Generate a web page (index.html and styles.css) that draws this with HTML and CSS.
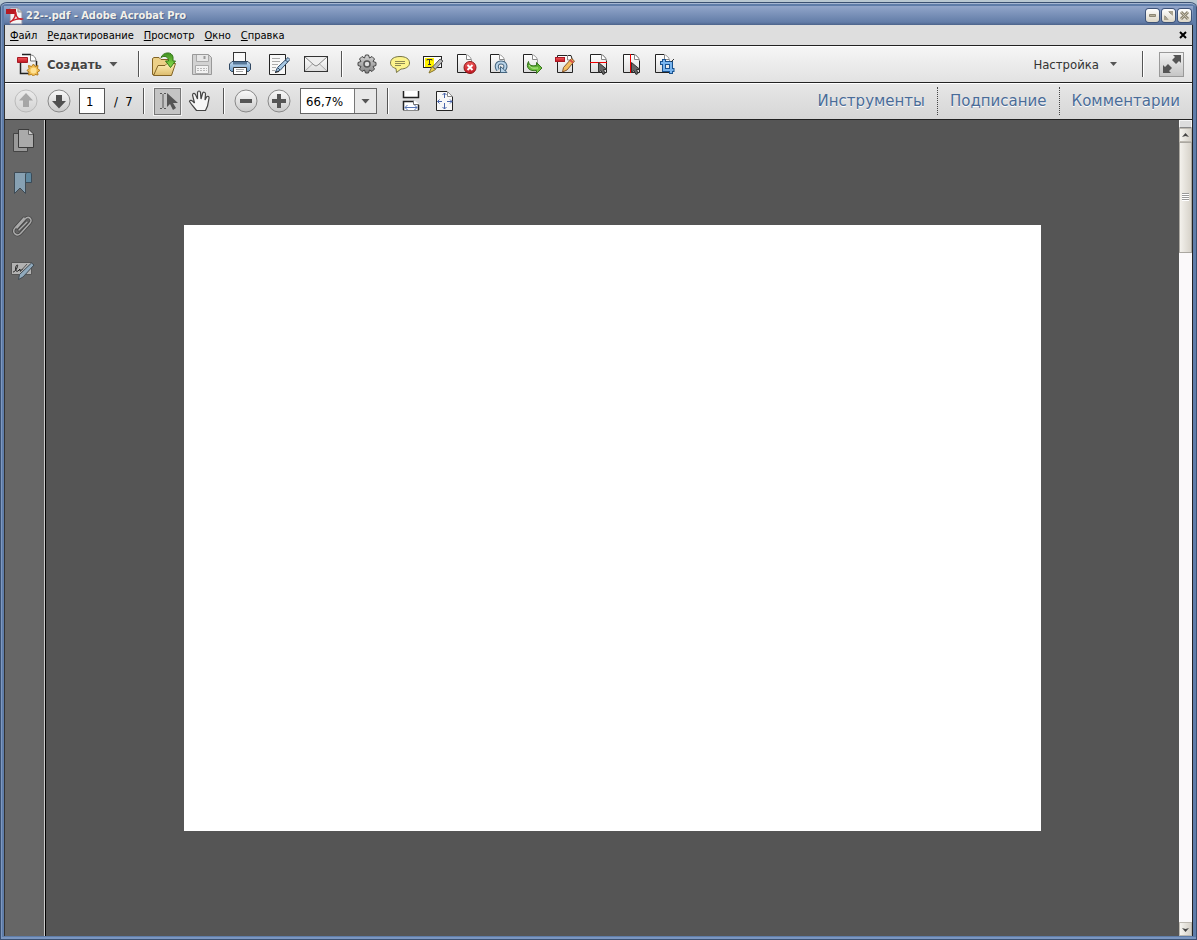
FILE: index.html
```html
<!DOCTYPE html>
<html lang="ru">
<head>
<meta charset="utf-8">
<title>22--.pdf - Adobe Acrobat Pro</title>
<link rel="stylesheet" href="styles.css">
</head>
<body>
<svg class="defs" aria-hidden="true">
  <defs>
    <linearGradient id="paper" x1="0" y1="0" x2="0" y2="1"><stop offset="0" stop-color="#fff"/><stop offset="1" stop-color="#dcdcdc"/></linearGradient>
    <linearGradient id="round" x1="0" y1="0" x2="0" y2="1"><stop offset="0" stop-color="#fafafa"/><stop offset="1" stop-color="#c9c9c9"/></linearGradient>
    <linearGradient id="green" x1="0" y1="0" x2="0" y2="1"><stop offset="0" stop-color="#3f8f20"/><stop offset="1" stop-color="#8ae04c"/></linearGradient>
    <linearGradient id="folder" x1="0" y1="0" x2="0" y2="1"><stop offset="0" stop-color="#fff0b8"/><stop offset="1" stop-color="#dcbb6c"/></linearGradient>
    <linearGradient id="red" x1="0" y1="0" x2="0" y2="1"><stop offset="0" stop-color="#f25a5a"/><stop offset="1" stop-color="#c01420"/></linearGradient>
    <linearGradient id="metal" x1="0" y1="0" x2="0" y2="1"><stop offset="0" stop-color="#d4d4d4"/><stop offset="1" stop-color="#858585"/></linearGradient>
    <linearGradient id="blue" x1="0" y1="0" x2="0" y2="1"><stop offset="0" stop-color="#c4dcf0"/><stop offset="1" stop-color="#6f9cc8"/></linearGradient>
    <g id="sheet"><path d="M3.500 2.500H13.500L17.500 6.500V20.500H3.500Z" fill="url(#paper)"/><path d="M12 2.500H3.500V20.500H17.500" fill="none" stroke="#222"/><path d="M12 2.500C14 3 17 5 17.500 8V20.500" fill="none" stroke="#999"/><path d="M12.500 3V7.500H17" fill="#fff" stroke="#888"/></g>
    <g id="sheetTall"><path d="M4.500 2.500H16L20.500 7V20.500H4.500Z" fill="url(#paper)"/><path d="M15 2.500H4.500V20.500H20.500V9" fill="none" stroke="#222"/><path d="M15 2.500C17 3 20 5 20.500 9" fill="none" stroke="#666"/><path d="M15.500 3V7.500H20" fill="#fff" stroke="#888"/></g>
    <path id="cursor" d="M12.500 10.500V20.500L15 18.500L17 22.500L19 21.500L17.500 17.500H21Z" fill="#666" stroke="#333"/>
  </defs>
</svg>
<div class="window">
  <header class="titlebar">
    <svg class="app-icon" width="18" height="18" viewBox="0 0 18 18"><path d="M4 1H12L16 5V17H4Z" fill="#f4f4f4" stroke="#8b8ba0"/><path d="M12 1V5H16" fill="#ccc" stroke="#999"/><path d="M0 2H10V7H0Z" fill="#b51a22"/><path d="M4 15C7 14 10 9 9 6C8 4 10 4 10 7C10 10 13 13 16 12C13 11 7 13 4 15Z" fill="none" stroke="#c81e28" stroke-width="1.500"/></svg>
    <h1 class="title">22--.pdf - Adobe Acrobat Pro</h1>
    <div class="window-controls">
      <button class="window-button" aria-label="Свернуть"><svg width="13" height="13"><path d="M3.500 5.500H9.500V7.500H3.500Z" fill="#b5ae98" stroke="#8d8775"/></svg></button>
      <button class="window-button" aria-label="Восстановить"><svg width="13" height="13"><path d="M6 2H11V7ZM2 6V11H7Z" fill="#aaa38e"/><path d="M7 3L10 6M3 7L6 10" stroke="#777" stroke-dasharray="1 1"/></svg></button>
      <button class="window-button" aria-label="Закрыть"><svg width="13" height="13"><path d="M3 3L10 10M10 3L3 10" stroke="#8d8775" stroke-width="3"/><path d="M3 3L10 10M10 3L3 10" stroke="#c8c1ac"/></svg></button>
    </div>
  </header>
  <div class="client">
    <nav class="menubar" aria-label="Меню">
      <button class="menu-item"><u>Ф</u>айл</button>
      <button class="menu-item"><u>Р</u>едактирование</button>
      <button class="menu-item"><u>П</u>росмотр</button>
      <button class="menu-item"><u>О</u>кно</button>
      <button class="menu-item"><u>С</u>правка</button>
      <button class="close-doc" aria-label="Закрыть документ"><svg width="8" height="8"><path d="M1 1L7 7M7 1L1 7" stroke="#000" stroke-width="2"/></svg></button>
    </nav>
    <div class="toolbar toolbar-main">
      <button class="create"><svg width="24" height="24"><path d="M4.500 3.500H15L20.500 9V21.500H4.500Z" fill="url(#paper)"/><path d="M6 2.500H15M20.500 9V15M4.500 10V21.500H13" fill="none" stroke="#222" stroke-width="1.500"/><path d="M14.500 3V9H20C20 6 18 3 14.500 3Z" fill="#fff" stroke="#777"/><path d="M1.500 5.500H11.500V10.500H1.500Z" fill="url(#red)" stroke="#a51a25"/><path d="M17.500 12L19 14.500L22 13.500L21.500 16.500L24 18.500L21.500 20L22 23L19 22.500L17.500 24L15.500 22.500L12.500 23L13 20L11 18.500L13 16.500L12.500 13.500L15.500 14.500Z" fill="#efbc50" stroke="#b37b1c"/><circle cx="17.500" cy="18.500" r="3" fill="#ffe193"/></svg><span>Создать</span><i class="arrow"></i></button>
      <span class="separator"></span>
      <div class="file-tools">
        <button class="tool" aria-label="Открыть"><svg width="24" height="24"><path d="M.5 22.500V6.500L2 5.500H7L9 7.500H19.500V22.500Z" fill="#ecd087" stroke="#826324"/><path d="M1.500 23.500L6 13.500H13L15 11.500H23.500L19.500 23.500Z" fill="url(#folder)" stroke="#826324"/><path d="M9 5.500C11 0 20 -1 21 5V9H23.500L18.500 15.500L13.500 9H16.500C16.500 5 13 3 9 5.500Z" fill="url(#green)" stroke="#347818"/></svg></button>
        <button class="tool" aria-label="Сохранить"><svg width="24" height="24"><path d="M2.500 2.500H18.500L21.500 5.500V22.500H2.500Z" fill="#d2d2d2" stroke="#999"/><path d="M6.500 3V9.500H18.500V3" fill="#e7e7e7" stroke="#aaa"/><path d="M14.500 4V7" stroke="#999" stroke-width="2"/><path d="M5.500 13.500H18.500V21.500H5.500Z" fill="#f2f2f2" stroke="#aaa"/><path d="M7 16.500H17M7 18.500H17" stroke="#b8b8b8" stroke-dasharray="2 1"/></svg></button>
        <button class="tool" aria-label="Печать"><svg width="24" height="24"><rect x="5.500" y=".5" width="12" height="10" fill="#f8f8f8" stroke="#333"/><path d="M4 9.500H20L22.500 12V17.500L20.500 19.500H3.500L1.500 17.500V12Z" fill="url(#blue)" stroke="#304862"/><path d="M5 10H19V12.500H5Z" fill="#587899"/><path d="M5.500 15.500H18.500V22.500H5.500Z" fill="#fff" stroke="#333"/><path d="M8 17.500H16M8 19.500H15" stroke="#a6a6a6"/></svg></button>
        <button class="tool" aria-label="Подписать"><svg width="24" height="24"><path d="M3.500 2.500H19.500V22.500H3.500Z" fill="#f8f8f8" stroke="#222"/><path d="M6 6.500H14M6 9.500H14M6 12.500H12M6 15.500H10M6 18.500H9" stroke="#aaa"/><path d="M22 5.500L24 7.500L14 18.500L9.500 20L11.500 15.500Z" fill="#a8c9e5" stroke="#334b66"/><path d="M12 16L14 18M19 8L22 10" stroke="#334b66"/><path d="M9 20.500L13 19.500" stroke="#222"/></svg></button>
        <button class="tool" aria-label="Отправить"><svg width="24" height="24"><rect x=".5" y="4.500" width="23" height="15" fill="url(#paper)" stroke="#333"/><path d="M1 19L9 11.500M23 19L15 11.500" stroke="#aaa"/><path d="M1 5L10 13Q12 15 14 13L23 5" fill="#eee" stroke="#888"/></svg></button>
      </div>
      <span class="separator"></span>
      <div class="quick-tools">
        <button class="tool" aria-label="Параметры"><svg width="24" height="24"><path d="M10.500 3H13.500L14.500 6L17 4.500L19.500 7L18 9.500L21 10.500V13.500L18 14.500L19.500 17L17 19.500L14.500 18L13.500 21H10.500L9.500 18L7 19.500L4.500 17L6 14.500L3 13.500V10.500L6 9.500L4.500 7L7 4.500L9.500 6Z" fill="url(#metal)" stroke="#444"/><circle cx="12" cy="12" r="3" fill="#ddd" stroke="#555" stroke-width="1.500"/></svg></button>
        <button class="tool" aria-label="Комментарий"><svg width="24" height="24"><path d="M12 4.500C18 4.500 21.500 7 21.500 11C21.500 15 17 17 13 17L8.500 20.500L8 16.500C4 15.500 2.500 13 2.500 11C2.500 7 6 4.500 12 4.500Z" fill="#fcf38c" stroke="#777547"/><path d="M7 9.500H17M7 11.500H17M7 13.500H13" stroke="#8c8855"/></svg></button>
        <button class="tool" aria-label="Выделить текст"><svg width="24" height="24"><rect x="2.500" y="4.500" width="18" height="11" fill="#fff" stroke="#222"/><path d="M4 6H13V15H4Z" fill="#fff200"/><path d="M6 8.500V7.500H11V8.500M8.500 8V13M7 12.500H10" fill="none" stroke="#333"/><path d="M19 7L22 9L14.500 17L11.500 15Z" fill="#b9b9b9" stroke="#555"/><path d="M11 14.500L14.500 17.500L12 19L8 21Z" fill="#ead04c" stroke="#85742c"/></svg></button>
        <button class="tool" aria-label="Удалить страницы"><svg width="24" height="24"><use href="#sheet"/><circle cx="16" cy="15.500" r="6" fill="url(#red)" stroke="#8d1818"/><path d="M13.500 13L18.500 18M18.500 13L13.500 18" stroke="#fff" stroke-width="2"/></svg></button>
        <button class="tool" aria-label="Повернуть страницы"><svg width="24" height="24"><use href="#sheet"/><path d="M11 18C8 13 11 10.500 14 10.500C18 10.500 20 14 17 18" fill="none" stroke="#44647e" stroke-width="4"/><path d="M11 18C8 13 11 10.500 14 10.500C18 10.500 20 14 17 18" fill="none" stroke="#b8d3e8" stroke-width="2"/><path d="M13.500 14.500V20.500H20L17.500 18Z" fill="#b8d3e8" stroke="#44647e"/></svg></button>
        <button class="tool" aria-label="Извлечь страницы"><svg width="24" height="24"><use href="#sheet"/><path d="M8.500 9.500C9 14 12 14 16.500 13.500V10.500L22 16L16.500 21.500V18.500C10 19.500 5 16 8.500 9.500Z" fill="url(#green)" stroke="#397321"/><path d="M9 13C11 17 14 16 18 16" fill="none" stroke="#c3ee9d"/></svg></button>
        <button class="tool" aria-label="Редактировать"><svg width="24" height="24"><path d="M4.500 3.500H18L19.500 8V20.500H4.500Z" fill="url(#paper)" stroke="#222"/><path d="M14.500 3V8H19" fill="#fff" stroke="#888"/><rect x="2.500" y="5.500" width="9" height="4" fill="url(#red)" stroke="#aa1824"/><path d="M18.500 6.500L21.500 9L14 18L9.500 20L10.500 15.500Z" fill="#f3bd61" stroke="#87562d"/><path d="M17 8L20 10.500" stroke="#d74f46" stroke-width="2"/></svg></button>
        <button class="tool" aria-label="Разделить по горизонтали"><svg width="24" height="24"><use href="#sheetTall"/><rect x="4" y="10" width="17" height="1" fill="#f00000"/><use href="#cursor"/></svg></button>
        <button class="tool" aria-label="Разделить по вертикали"><svg width="24" height="24"><use href="#sheetTall"/><rect x="11" y="2" width="1" height="19" fill="#f00000"/><use href="#cursor"/></svg></button>
        <button class="tool" aria-label="Обрезать"><svg width="24" height="24"><use href="#sheet"/><path d="M12 7V18H22.500M8 11H19V22" fill="none" stroke="#19528f" stroke-width="4"/><path d="M12 8V18H21.500M9 11H19V21" fill="none" stroke="#79b5ef" stroke-width="2"/><path d="M19 10L22 7" stroke="#333"/></svg></button>
      </div>
      <div class="right-tools">
        <button class="customize">Настройка<i class="arrow small"></i></button>
        <span class="separator"></span>
        <button class="fullscreen" aria-label="Полный экран"><svg width="22" height="22"><path d="M12 2H20V10L18 8L15 11L11 7L14 4ZM2 12L4 14L7 11L11 15L8 18L10 20H2Z" fill="#555"/></svg></button>
      </div>
    </div>
    <div class="toolbar toolbar-view">
      <div class="pager">
        <button class="circle disabled" aria-label="Предыдущая страница"><svg width="24" height="24"><circle cx="12" cy="12" r="11" fill="url(#round)" stroke="#888"/><path d="M12 4L19 11.500H15V18H9V11.500H5Z" fill="#555"/></svg></button>
        <button class="circle" aria-label="Следующая страница"><svg width="24" height="24"><circle cx="12" cy="12" r="11" fill="url(#round)" stroke="#888"/><path d="M12 19.500L5 12H9V6H15V12H19Z" fill="#505050"/></svg></button>
      </div>
      <input class="page-number" aria-label="Страница" value="1">
      <span class="page-total">/&nbsp; 7</span>
      <span class="separator"></span>
      <div class="pointer-tools">
        <button class="selected" aria-label="Выделение"><svg width="24" height="24"><path d="M4 4.500H6M8 4.500H10M4 19.500H6M8 19.500H10M7 5V19" stroke="#555"/><path d="M11 4V18L14 15L17 21L20 19L17 14H22Z" fill="#555"/></svg></button>
        <button class="hand" aria-label="Рука"><svg width="24" height="24"><path d="M8.500 21.500L4 16L1.500 12.500C2 10.500 4 11 6.500 14L4.500 6C5 3.500 7 4 8 6.500L9.500 10V3.500C10 1.500 12 1.500 12.500 3.500L13 10L14.500 4.500C15 2.500 17.500 3 17.500 5L17 11L18.500 8C20 6.500 21.500 7.500 21 9.500L19.500 17L17.500 21.500Z" fill="#f7f7f7" stroke="#444" stroke-width="1.200"/></svg></button>
      </div>
      <span class="separator"></span>
      <div class="zoom-buttons">
        <button class="circle" aria-label="Уменьшить"><svg width="24" height="24"><circle cx="12" cy="12" r="11" fill="url(#round)" stroke="#888"/><path d="M6 10H18V14H6Z" fill="#555"/></svg></button>
        <button class="circle" aria-label="Увеличить"><svg width="24" height="24"><circle cx="12" cy="12" r="11" fill="url(#round)" stroke="#888"/><path d="M10 5H14V10H19V14H14V19H10V14H5V10H10Z" fill="#555"/></svg></button>
      </div>
      <div class="zoom-box"><input class="zoom-value" aria-label="Масштаб" value="66,7%"><button class="zoom-drop" aria-label="Выбрать масштаб"><i class="arrow"></i></button></div>
      <span class="separator"></span>
      <div class="fit-tools">
        <button class="tool" aria-label="По ширине"><svg width="24" height="24"><path d="M4 2H20V8H4ZM4 12H16L20 15V21H4Z" fill="#fff"/><path d="M4.500 2V8.500H19.500V2M4.500 21V12.500H15M19.500 16V21" fill="none" stroke="#222" stroke-width="1.500"/><path d="M4 21.500H20" stroke="#888"/><path d="M14.500 12V15.500H20" fill="none" stroke="#777"/><path d="M6 18.500H18M8.500 16L6 18.500L8.500 21M15.500 16L18 18.500L15.500 21" fill="none" stroke="#5976b5"/></svg></button>
        <button class="tool" aria-label="Страница целиком"><svg width="24" height="24"><path d="M4.500 2.500H15L20.500 8V21.500H4.500Z" fill="#f7f7f7" stroke="#222"/><path d="M15.500 3V7.500H20" fill="#fff" stroke="#888"/><path d="M12.500 4V9M12.500 14V20M5.500 12.500H10M15 12.500H20M10.500 6L12.500 4L14.500 6M10.500 18L12.500 20L14.500 18M7.500 10.500L5.500 12.500L7.500 14.500M18 10.500L20 12.500L18 14.500" fill="none" stroke="#4965aa"/></svg></button>
      </div>
      <nav class="panes" aria-label="Панели">
        <button class="pane-link">Инструменты</button>
        <button class="pane-link">Подписание</button>
        <button class="pane-link">Комментарии</button>
      </nav>
    </div>
    <div class="workspace">
      <aside class="sidebar" aria-label="Навигация">
        <button class="side-tool" aria-label="Миниатюры страниц"><svg width="24" height="24"><path d="M2.500 5.500H16.500V23.500H2.500Z" fill="#999" stroke="#444"/><path d="M7.500 1.500H18L22.500 6V19.500H7.500Z" fill="#aaa" stroke="#3b3b3b"/><path d="M17.500 2V6.500H22" fill="#ccc" stroke="#666"/></svg></button>
        <button class="side-tool" aria-label="Закладки"><svg width="24" height="24"><path d="M14 1.500H19.500Q20.500 2 20.500 4V11.500H14Z" fill="#60889f" stroke="#3a4b58"/><path d="M3.500 1.500H16Q14 2 14.500 5V22.500L9 17L3.500 22.500Z" fill="#87a1b3" stroke="#3e4b55"/></svg></button>
        <button class="side-tool" aria-label="Вложения"><svg width="24" height="24"><path d="M6 14L14 5C18 1 22 6 19 9L10 19C6 24 0 18 4 14L13 4M8 16L16 8" fill="none" stroke="#444" stroke-width="3" stroke-linecap="round"/><path d="M6 14L14 5C18 1 22 6 19 9L10 19C6 24 0 18 4 14L13 4M8 16L16 8" fill="none" stroke="#aaa" stroke-width="1.500" stroke-linecap="round"/></svg></button>
        <button class="side-tool" aria-label="Подписи"><svg width="24" height="24"><path d="M.5 5.500H20.500V17.500H.5Z" fill="#b2b2b2" stroke="#555"/><path d="M2 15C5 15 8 7 6 8C4 9 4 16 7 14L9 12L9 14L12 12" fill="none" stroke="#222"/><path d="M20.500 6L23 8L12 20L7.500 22.500L8.500 17.500Z" fill="#91aabd" stroke="#3f4a52"/><path d="M16 7L9 15" stroke="#555"/></svg></button>
      </aside>
      <main class="document"><div class="page"></div></main>
      <div class="scrollbar">
        <div class="splitter"></div>
        <button class="scroll-button" aria-label="Вверх"><svg width="7" height="5"><path d="M0 4L3.500 0L7 4L3.500 3Z" fill="#444"/></svg></button>
        <div class="track"><div class="thumb"><i class="grip"></i></div></div>
        <button class="scroll-button" aria-label="Вниз"><svg width="7" height="5"><path d="M0 1L3.500 5L7 1L3.500 2Z" fill="#444"/></svg></button>
      </div>
    </div>
  </div>
</div>
</body>
</html>
```
FILE: styles.css
```css
* { box-sizing: border-box; }
body {
  margin: 0;
  background: #b9c8d2;
  color: #000;
  font-family: "DejaVu Sans Condensed", "DejaVu Sans", sans-serif;
  font-size: 11px;
}
button {
  display: flex;
  align-items: center;
  justify-content: center;
  padding: 0;
  border: 0;
  background: none;
  color: inherit;
  font: inherit;
  white-space: nowrap;
}
input { min-width: 0; margin: 0; font: inherit; }
svg { display: block; flex: none; }
.defs { position: absolute; width: 0; height: 0; }

.window {
  display: flex;
  flex-direction: column;
  height: 100vh;
  padding: 4px 4px 4px;
  border-top: 2px solid #b9c8d2;
  border-radius: 7px 7px 0 0;
  background: #5f7da9;
  box-shadow: inset 0 0 0 1px #3b5172, inset 0 2px 0 #a6b7d2, inset 2px 0 0 #7f98bf, inset 0 -3px 0 #7b96c0;
}
.titlebar {
  display: flex;
  align-items: center;
  height: 19px;
  padding: 0 2px;
  background: linear-gradient(#92a6ca, #637da8 85%, #4c638a);
}
.title {
  flex: 1;
  margin: 0 0 0 2px;
  color: #f3f1ea;
  font-size: 11px;
  text-shadow: 1px 1px 0 #4e648a;
}
.window-controls { display: flex; gap: 3px; }
.window-button {
  width: 13px;
  height: 13px;
  border-radius: 3px;
  background: linear-gradient(#fff, #dcd6c6);
  box-shadow: 0 0 0 1px #3e5378;
}
.client { display: flex; flex: 1; flex-direction: column; min-height: 0; border-left: 1px solid #333; border-right: 1px solid #222; }
.menubar {
  display: flex;
  gap: 10px;
  height: 20px;
  padding: 0 5px;
  background: #dedede;
}
.close-doc { margin-left: auto; }

.toolbar {
  display: flex;
  align-items: center;
  height: 37px;
  border-top: 1px solid #222;
  box-shadow: inset 0 1px 0 #fff;
}
.toolbar-main { background: linear-gradient(#f6f6f6, #e2e2e2); }
.toolbar-view { background: linear-gradient(#e7e7e7, #d6d6d6); }
.separator { flex: none; width: 2px; height: 26px; border-left: 1px solid #555; border-right: 1px solid #fff; }
.arrow { width: 9px; height: 5px; background: #555; clip-path: polygon(0 0, 100% 0, 50% 100%); }
.arrow.small { width: 7px; height: 4px; }
.create {
  gap: 7px;
  padding: 0 20px 0 11px;
  color: #444;
  font-size: 13px;
  font-weight: bold;
  text-shadow: 0 1px 0 #fff;
}
.file-tools { display: flex; padding: 0 6px 0 5px; }
.file-tools .tool { width: 38px; }
.quick-tools { display: flex; padding-left: 8px; }
.quick-tools .tool { width: 33px; }
.right-tools { display: flex; align-items: center; margin-left: auto; padding-right: 8px; }
.customize { gap: 11px; margin-right: 25px; color: #333; font-size: 13px; }
.fullscreen { width: 25px; height: 25px; margin-left: 15px; border: 1px solid #999; background: linear-gradient(#f2f2f2, #c5c5c5); }

.pager { display: flex; gap: 9px; padding: 0 8px 0 9px; }
.disabled { opacity: .4; }
.page-number {
  width: 26px;
  height: 26px;
  padding: 0 6px;
  border: 1px solid #555;
  background: #fff;
  font-size: 13px;
}
.page-total { width: 38px; padding-left: 9px; font-size: 13px; white-space: nowrap; }
.pointer-tools { display: flex; gap: 7px; padding: 0 11px 0 9px; }
.selected { width: 27px; height: 27px; border: 1px solid #777; background: #c4c4c4; box-shadow: 0 0 0 1px #f2f2f2; }
.zoom-buttons { display: flex; gap: 9px; padding: 0 9px; }
.zoom-box { display: flex; width: 77px; height: 26px; margin-right: 10px; border: 1px solid #666; background: #fff; }
.zoom-value { flex: 1; width: 0; padding: 0 5px; border: 0; background: none; font-size: 13px; }
.zoom-drop { width: 22px; border-left: 1px solid #777; background: #e8e8e8; }
.fit-tools { display: flex; gap: 9px; padding-left: 10px; }
.panes { display: flex; margin-left: auto; }
.pane-link {
  height: 28px;
  padding: 0 12px;
  color: #4a6c98;
  font-family: "DejaVu Sans", sans-serif;
  font-size: 15px;
  text-shadow: 0 1px 0 #fff;
}
.pane-link + .pane-link { border-left: 1px dotted #444; }

.workspace { display: flex; flex: 1; min-height: 0; border-top: 1px solid #222; }
.sidebar {
  display: flex;
  flex-direction: column;
  align-items: center;
  gap: 19px;
  width: 41px;
  padding-top: 8px;
  border-right: 1px solid #000;
  background: #666;
  box-shadow: inset -1px 0 0 #ccc;
}
.sidebar .side-tool { margin-right: 4px; }
.document { display: flex; flex: 1; align-items: center; justify-content: center; min-width: 0; background: #555; }
.page { width: 75.64%; aspect-ratio: 857 / 606; background: #fff; }
.scrollbar { display: flex; flex-direction: column; width: 13px; background: #fbf9fa; }
.splitter { height: 8px; border: 1px solid #f6f6f6; border-bottom-color: #888; background: #ddd; }
.scroll-button { height: 14px; border: 1px solid #bdb9b1; background: linear-gradient(90deg, #f5f4f0, #d5d1c8); }
.track { flex: 1; }
.thumb {
  display: flex;
  align-items: center;
  justify-content: center;
  height: 14.200%;
  border: 1px solid #aaa7a0;
  background: linear-gradient(90deg, #f3f1ec, #d7d3ca);
}
.grip { width: 7px; height: 8px; background: repeating-linear-gradient(#999 0 1px, #fff 1px 2px); }
```
